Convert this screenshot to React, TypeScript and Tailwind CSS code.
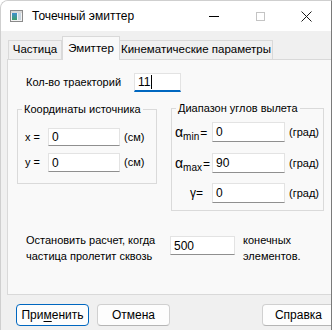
import React from "react";

function Field({ value, className, focused }: { value: string; className: string; focused?: boolean }) {
  return (
    <div
      className={
        "flex items-center bg-white pl-[3px] border border-[#e3e3e3] " +
        (focused ? "border-b-2 border-b-[#0067c0] " : "border-b-[#8f8f8f] ") +
        className
      }
    >
      <span className="leading-none text-[12px]">{value}</span>
      {focused && <span className="w-px h-[14px] bg-black ml-px" />}
    </div>
  );
}

function Button({ label, className, focused }: { label: React.ReactNode; className: string; focused?: boolean }) {
  return (
    <div
      className={
        "h-[22px] flex items-center justify-center rounded-[4px] bg-[#fdfdfd] border " +
        (focused ? "border-[#0067c0] " : "border-[#d0d0d0] border-b-[#b5b5b5] ") +
        className
      }
    >
      {label}
    </div>
  );
}

function Alpha({ sub }: { sub: string }) {
  return (
    <span className="flex items-end leading-none">
      <span className="text-[14px]">α</span>
      <span className="text-[10px] translate-y-[3px]">{sub}</span>
      <span className="ml-px text-[12px]">=</span>
    </span>
  );
}

export default function App() {
  return (
    <div className="w-[332px] h-[330px] bg-[#f0f0f0] flex flex-col overflow-hidden whitespace-nowrap rounded-tl-[8px] border-l border-t border-[#cfcfcf] border-r border-r-[#7a7a7a] text-[11px] text-black font-['Liberation_Sans',Arial,sans-serif]">
      {/* title bar */}
      <div className="h-[30px] shrink-0 bg-white flex items-center pl-[9px]">
        <svg width="13" height="12" viewBox="0 0 13 12">
          <rect x="0.5" y="0.5" width="12" height="11" fill="#f4f4f4" stroke="#8a8a8a" />
          <rect x="1" y="1" width="11" height="2" fill="#d8d8d8" />
          <defs>
            <linearGradient id="g" x1="0" y1="0" x2="0" y2="1">
              <stop offset="0" stopColor="#3f8fd0" />
              <stop offset="1" stopColor="#3d9e6a" />
            </linearGradient>
          </defs>
          <rect x="2" y="3" width="5" height="7" fill="url(#g)" />
          <rect x="8" y="3" width="3" height="7" fill="#c9d6e0" />
        </svg>
        <span className="ml-[9px] text-[12px]">Точечный эмиттер</span>
        <div className="ml-auto flex items-center">
          <div className="w-[10px] h-px bg-black mr-[37px]" />
          <div className="w-[9px] h-[9px] border border-[#c4c4c4] mr-[36px]" />
          <svg width="11" height="11" viewBox="0 0 11 11" className="mr-[19px]">
            <path d="M0.5 0.5 L10.5 10.5 M10.5 0.5 L0.5 10.5" stroke="#1a1a1a" strokeWidth="1" />
          </svg>
        </div>
      </div>

      {/* body */}
      <div className="flex-1 flex flex-col pt-[5px] pl-[6px]">
        {/* tabs */}
        <div className="flex items-end h-[23px] pl-px relative z-10 text-[11.5px]">
          <div className="h-[19px] w-[54px] border border-[#d9d9d9] border-b-0 bg-[#f0f0f0] flex items-center justify-center">
            Частица
          </div>
          <div className="h-[24px] w-[58px] -mb-px border border-[#d9d9d9] border-b-0 bg-[#f9f9f9] flex items-start pt-[3px] justify-center">
            Эмиттер
          </div>
          <div className="h-[19px] w-[153px] border border-[#d9d9d9] border-b-0 border-l-0 bg-[#f0f0f0] flex items-center justify-center">
            Кинематические параметры
          </div>
        </div>

        {/* panel */}
        <div className="h-[236px] border border-[#d9d9d9] border-r-0 bg-[#f9f9f9] flex flex-col pl-[9px]">
          <div className="flex items-center mt-[13px] h-[19px]">
            <span className="ml-[9px] w-[108px]">Кол-во траекторий</span>
            <Field value="11" focused className="w-[47px] h-[19px]" />
          </div>

          <div className="flex mt-[10px]">
            <fieldset className="w-[140px] h-[82px] border border-[#dadada] px-[7px]">
              <legend className="px-[2px] -ml-[3px] leading-[14px]">Координаты источника</legend>
              <div className="flex flex-col gap-[7px] pt-[12px]">
                <div className="flex items-center h-[18px]">
                  <span className="w-[23px]">x =</span>
                  <Field value="0" className="w-[72px] h-[18px]" />
                  <span className="ml-[4px]">(см)</span>
                </div>
                <div className="flex items-center h-[19px]">
                  <span className="w-[23px]">y =</span>
                  <Field value="0" className="w-[72px] h-[19px]" />
                  <span className="ml-[4px]">(см)</span>
                </div>
              </div>
            </fieldset>

            <fieldset className="ml-[14px] -mt-px w-[153px] h-[110px] border border-[#dadada] pl-[3px]">
              <legend className="px-[2px] ml-px leading-[14px]">Диапазон углов вылета</legend>
              <div className="flex flex-col pt-[7px]">
                <div className="flex items-center h-[20px]">
                  <span className="w-[37px]">
                    <Alpha sub="min" />
                  </span>
                  <Field value="0" className="w-[73px] h-[20px]" />
                  <span className="ml-[4px]">(град)</span>
                </div>
                <div className="flex items-center h-[20px] mt-[11px]">
                  <span className="w-[37px]">
                    <Alpha sub="max" />
                  </span>
                  <Field value="90" className="w-[73px] h-[20px]" />
                  <span className="ml-[4px]">(град)</span>
                </div>
                <div className="flex items-center h-[20px] mt-[10px]">
                  <span className="w-[37px] pl-[15px] text-[12px]">γ=</span>
                  <Field value="0" className="w-[73px] h-[20px]" />
                  <span className="ml-[4px]">(град)</span>
                </div>
              </div>
            </fieldset>
          </div>

          <div className="flex items-start mt-[21px] ml-[9px] leading-[16px]">
            <div className="w-[144px]">
              <div>Остановить расчет, когда</div>
              <div>частица пролетит сквозь</div>
            </div>
            <Field value="500" className="w-[65px] h-[19px] mt-[4px]" />
            <div className="ml-[8px]">
              <div>конечных</div>
              <div>элементов.</div>
            </div>
          </div>
        </div>

        {/* buttons */}
        <div className="flex mt-[9px] pl-[9px] text-[12px]">
          <Button
            focused
            className="w-[73px]"
            label={
              <span>
                При<span className="underline underline-offset-2">м</span>енить
              </span>
            }
          />
          <Button className="w-[73px] ml-[8px]" label="Отмена" />
          <Button className="w-[73px] ml-auto -mr-[4px]" label="Справка" />
        </div>
      </div>
    </div>
  );
}
